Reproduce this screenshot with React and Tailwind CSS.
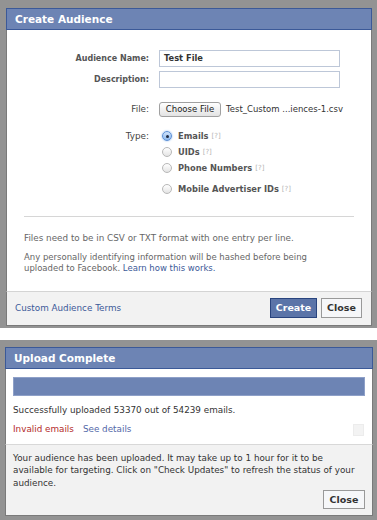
import React from 'react';

const Radio = ({ checked }) => (
  <span
    className={`inline-flex items-center justify-center w-[10px] h-[10px] rounded-full border ${
      checked
        ? 'border-[#5b8fd6] bg-gradient-to-b from-[#cfe3fb] to-[#8db9ee] shadow-[0_0_2px_#7fb0ec]'
        : 'border-[#b8b8b8] bg-gradient-to-b from-white to-[#e4e4e4]'
    }`}
  >
    {checked && <span className="w-[3px] h-[3px] rounded-full bg-[#1d2a44]" />}
  </span>
);

const TypeOption = ({ label, checked, className = '' }) => (
  <div className={`flex items-center gap-[6px] ${className}`}>
    <Radio checked={checked} />
    <span className="font-bold text-[#555] text-[8.3px]">{label}</span>
    <span className="text-[#b5b5b5] text-[7px] -ml-[3px]">[?]</span>
  </div>
);

const Header = ({ title }) => (
  <div className="h-[22px] bg-[#6d84b4] border border-[#3b5998] flex items-center pl-[8px]">
    <span className="text-white font-bold text-[10.5px]">{title}</span>
  </div>
);

export default function App() {
  return (
    <div className="w-[377px] h-[520px] bg-white flex flex-col font-['DejaVu_Sans',sans-serif] text-[8.8px] text-[#333] leading-none">
      {/* create audience */}
      <div className="h-[328px] bg-[#939393] pt-[8px] pl-[6px] pr-[5px]">
        <div className="w-[366px]">
          <Header title="Create Audience" />
          <div className="bg-white border-x border-[#7a7a7a] pt-[20px]">
            <div className="grid grid-cols-[142px_1fr] gap-x-[10px] items-center">
              <span className="text-right font-bold text-[#555] text-[8px]">Audience Name:</span>
              <div className="w-[181px] h-[17px] border border-[#bdc7d8] flex items-center pl-[4px] font-bold text-[#333] text-[8.3px]">
                Test File
              </div>
              <span className="text-right font-bold text-[#555] text-[8px] mt-[4px]">Description:</span>
              <div className="w-[181px] h-[17px] border border-[#bdc7d8] mt-[4px]" />
              <span className="text-right text-[#444] text-[8.8px] mt-[14px]">File:</span>
              <div className="flex items-center gap-[5px] mt-[14px]">
                <span className="w-[62px] h-[15px] rounded-[3px] border border-[#a0a0a0] bg-gradient-to-b from-white to-[#e3e3e3] flex items-center justify-center text-[8.5px] text-[#222]">
                  Choose File
                </span>
                <span className="text-[8.5px] text-[#333]">Test_Custom ...iences-1.csv</span>
              </div>
              <span className="text-right text-[#444] text-[8.8px] mt-[14px] self-start pt-[1px]">Type:</span>
              <div className="flex flex-col mt-[14px] pl-[3px]">
                <TypeOption label="Emails" checked />
                <TypeOption label="UIDs" className="mt-[6px]" />
                <TypeOption label="Phone Numbers" className="mt-[6px]" />
                <TypeOption label="Mobile Advertiser IDs" className="mt-[11px]" />
              </div>
            </div>
            <div className="mx-[17px] mt-[22px] border-t border-[#d6d6d6]" />
            <div className="px-[17px] pt-[16px] pb-[16px] text-[#666] leading-[11.5px]">
              <p>Files need to be in CSV or TXT format with one entry per line.</p>
              <p className="mt-[7px] w-[325px] text-[8.5px]">
                Any personally identifying information will be hashed before being uploaded to Facebook.{' '}
                <span className="text-[#3b5998]">Learn how this works.</span>
              </p>
            </div>
          </div>
          <div className="h-[35px] bg-[#f2f2f2] border border-t-[#d4d4d4] border-x-[#7a7a7a] border-b-[#7a7a7a] flex items-center justify-between pl-[8px] pr-[9px]">
            <span className="text-[#3b5998]">Custom Audience Terms</span>
            <div className="flex gap-[4px]">
              <span className="w-[47px] h-[20px] bg-[#5b74a8] border border-[#29447e] flex items-center justify-center text-white font-bold text-[9.5px]">
                Create
              </span>
              <span className="w-[41px] h-[20px] bg-[#f6f7f9] border border-[#999] flex items-center justify-center text-[#333] font-bold text-[9.5px]">
                Close
              </span>
            </div>
          </div>
        </div>
      </div>

      <div className="h-[12px] bg-white" />

      {/* upload complete */}
      <div className="flex-1 bg-[#939393] pt-[7px] pl-[5px] pr-[4px]">
        <div className="w-[368px]">
          <Header title="Upload Complete" />
          <div className="bg-white border-x border-[#7a7a7a] px-[7px] pt-[8px]">
            <div className="h-[19px] bg-[#6d84b4] border border-[#8ea0c8]" />
            <p className="mt-[10px]">Successfully uploaded 53370 out of 54239 emails.</p>
            <div className="flex items-center justify-between mt-[9px] pb-[8px]">
              <div className="flex gap-[9px]">
                <span className="text-[#b32a2a]">Invalid emails</span>
                <span className="text-[#5368a8]">See details</span>
              </div>
              <span className="w-[11px] h-[12px] bg-[#f3f3f3] border border-[#ececec] mr-[1px]" />
            </div>
          </div>
          <div className="bg-[#f2f2f2] border border-t-[#d8d8d8] border-x-[#7a7a7a] border-b-[#7a7a7a] px-[7px] pt-[7px] pb-[6px]">
            <p className="w-[345px] leading-[12.5px] text-[#333]">
              Your audience has been uploaded. It may take up to 1 hour for it to be available for targeting. Click on "Check Updates" to refresh the status of your audience.
            </p>
            <div className="flex justify-end mt-[1px]">
              <span className="w-[42px] h-[19px] bg-[#f6f7f9] border border-[#999] flex items-center justify-center text-[#333] font-bold text-[9.5px]">
                Close
              </span>
            </div>
          </div>
        </div>
      </div>
    </div>
  );
}
